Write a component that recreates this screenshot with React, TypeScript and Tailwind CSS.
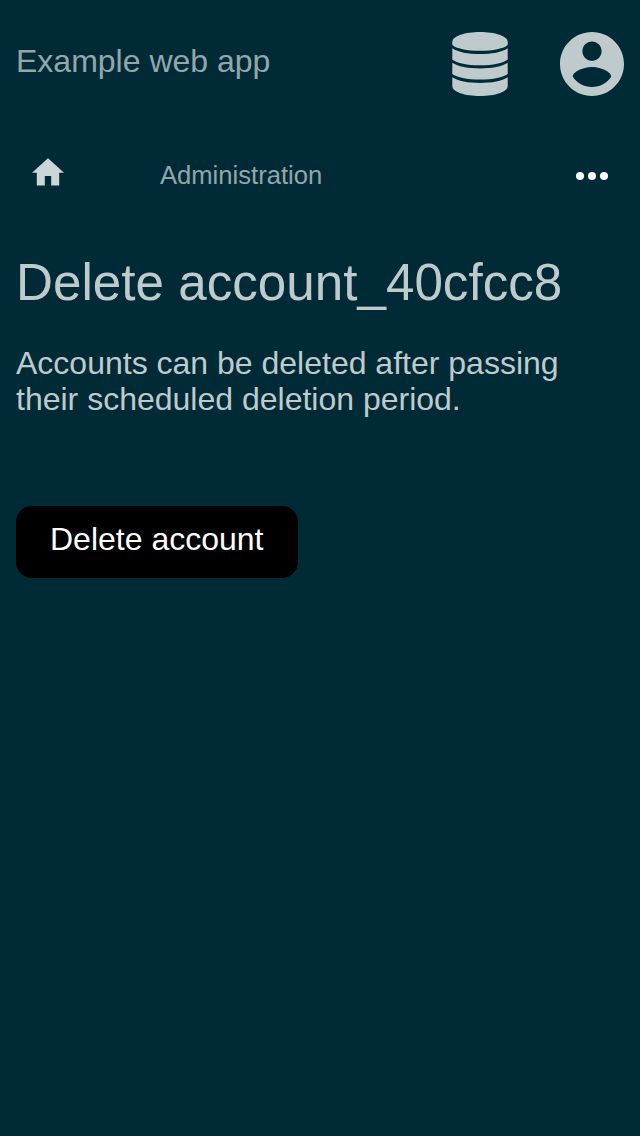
import React from "react";

function DatabaseIcon() {
  return (
    <svg viewBox="0 0 56 64" className="h-16 w-14" fill="currentColor" aria-label="Database">
      <path d="M.3 10C.3 4 13 0 28 0s27.7 4 27.7 10v3C52 16.500 41 18.800 28 18.800S4 16.500.3 13z" />
      <path d="M.3 16.200C6 20.200 16 22.100 28 22.100s22-1.900 27.700-5.900v11.200C51 31 41 33.200 28 33.200S5 31 .3 27.400z" />
      <path d="M.3 30.800C6 34.600 16 36.500 28 36.500s22-1.900 27.700-5.700v11.200C51 45.500 41 47.600 28 47.600S5 45.500.3 42z" />
      <path d="M.3 45.300C6 49.100 16 51 28 51s22-1.900 27.700-5.700V54C55.700 60 43 64 28 64S.3 60 .3 54z" />
    </svg>
  );
}

function AccountIcon() {
  return (
    <svg viewBox="2 2 20 20" className="size-16" fill="currentColor" aria-label="Account">
      <path d="M12 2C6.480 2 2 6.480 2 12s4.480 10 10 10 10-4.480 10-10S17.520 2 12 2zm0 3c1.660 0 3 1.340 3 3s-1.340 3-3 3-3-1.340-3-3 1.340-3 3-3zm0 14.200c-2.500 0-4.710-1.280-6-3.220.03-1.990 4-3.080 6-3.080 1.990 0 5.970 1.090 6 3.080-1.290 1.940-3.500 3.220-6 3.220z" />
    </svg>
  );
}

function HomeIcon() {
  return (
    <svg viewBox="2 3 20 17.5" className="mb-2 h-7 w-8 text-[#cdd6d7]" fill="currentColor" aria-label="Home">
      <path d="M10 20.200v-6h4v6h5v-8h3L12 3.200 2 12.200h3v8z" />
    </svg>
  );
}

function MoreIcon() {
  return (
    <svg viewBox="0 0 32 8" className="ml-auto h-2 w-8" fill="white" aria-label="More">
      <circle cx="4" cy="4" r="4" />
      <circle cx="16" cy="4" r="4" />
      <circle cx="28" cy="4" r="4" />
    </svg>
  );
}

export default function App() {
  return (
    <div className="min-h-[1136px] w-[640px] bg-[#002b36] font-['Liberation_Sans',Arial,sans-serif] text-[#bfcacd]">
      <header className="flex h-32 items-center justify-between px-4">
        <span className="mb-1.5 text-[32px] leading-9 text-[#93a6ab]">Example web app</span>
        <div className="flex items-center gap-[52px]">
          <DatabaseIcon />
          <AccountIcon />
        </div>
      </header>
      <nav className="flex h-24 items-center px-8">
        <HomeIcon />
        <span className="mb-0.5 ml-24 text-[25.6px] leading-8 text-[#93a6ab]">Administration</span>
        <MoreIcon />
      </nav>
      <main className="px-4 pt-[29px]">
        <h1 className="whitespace-nowrap text-[51.2px] leading-[59px]">Delete account_40cfcc8</h1>
        <p className="mt-[33px] text-[32px] leading-9">
          Accounts can be deleted after passing
          <br />
          their scheduled deletion period.
        </p>
        <button className="mt-[89px] flex h-[72px] w-[282px] items-center rounded-2xl bg-black pb-1.5 pl-[34px] text-[32px] leading-9 text-white">
          Delete account
        </button>
      </main>
    </div>
  );
}
